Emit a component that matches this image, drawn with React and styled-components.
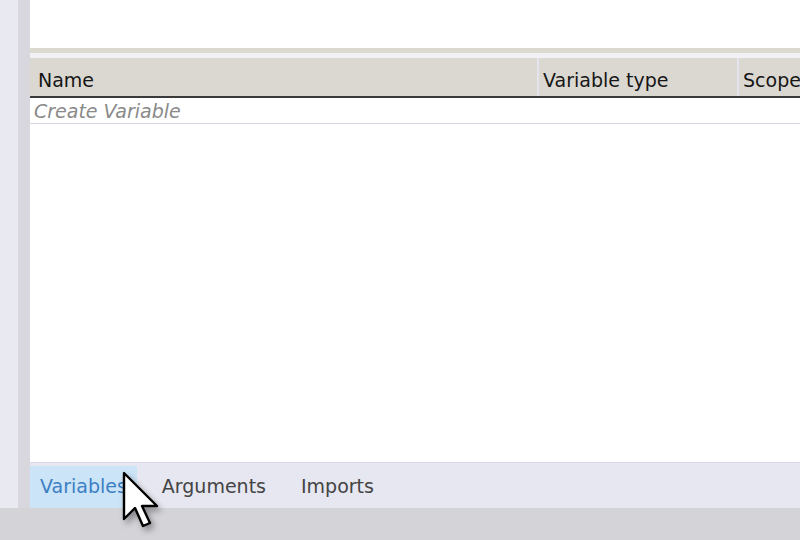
import React from "react";
import styled, { createGlobalStyle } from "styled-components";

const Global = createGlobalStyle`
  html, body {
    margin: 0;
    padding: 0;
    background: #d5d5da;
    overflow: hidden;
  }
  #root {
    width: 800px;
    height: 540px;
  }
`;

const Frame = styled.div`
  width: 800px;
  height: 540px;
  display: grid;
  grid-template-rows: 508px 32px;
  font-family: Tahoma, "DejaVu Sans", "Noto Sans", sans-serif;
`;

const Workspace = styled.div`
  display: grid;
  grid-template-columns: 18px 12px 1fr;
`;

const Gutter = styled.div`
  background: ${({ shade }) => shade};
`;

const StatusStrip = styled.div`
  background: #d3d3d8;
`;

const Pane = styled.div`
  display: flex;
  flex-direction: column;
  min-width: 0;
  overflow: hidden;
`;

const Designer = styled.div`
  height: 48px;
  background: #ffffff;
  border-bottom: 5px solid #dcd9d1;
`;

const Spacer = styled.div`
  height: 5px;
  background: #f1f1f6;
`;

const Grid = styled.div`
  flex: 1;
  background: #ffffff;
  display: flex;
  flex-direction: column;
`;

const HeaderRow = styled.div`
  height: 38px;
  display: grid;
  grid-template-columns: 507px 200px 1fr;
  background: #dbd8d2;
  border-bottom: 2px solid #3a3a3a;
`;

const HeaderCell = styled.div`
  display: flex;
  align-items: center;
  padding: 5px 0 0 ${({ first }) => (first ? "8px" : "4px")};
  font-size: 19px;
  color: #161616;
  white-space: nowrap;
  border-left: ${({ first }) => (first ? "none" : "2px solid #e4e3ee")};
`;

const NewRow = styled.div`
  height: 25px;
  display: flex;
  align-items: center;
  padding-left: 4px;
  font-size: 19px;
  font-style: italic;
  color: #8a8a8a;
  border-bottom: 1px solid #d6d6e4;
`;

const TabBar = styled.div`
  height: 46px;
  display: flex;
  align-items: stretch;
  padding-top: 3px;
  background: #e6e7f0;
  border-top: 1px solid #d8d8e6;
  box-sizing: border-box;
`;

const Tab = styled.div`
  display: flex;
  align-items: center;
  padding: 0 10px 3px 10px;
  margin-right: 15px;
  font-size: 19px;
  color: ${({ active }) => (active ? "#3d7fc4" : "#444444")};
  background: ${({ active }) => (active ? "#cce4f7" : "transparent")};
`;

const Cursor = styled.svg`
  position: absolute;
  left: 122px;
  top: 471px;
  filter: drop-shadow(3px 4px 3px rgba(0, 0, 0, 0.35));
`;

export default function App() {
  return (
    <>
      <Global />
      <Frame>
        <Workspace>
          <Gutter shade="#e9e9f1" />
          <Gutter shade="#d7d7dd" />
          <Pane>
            <Designer />
            <Spacer />
            <Grid>
              <HeaderRow>
                <HeaderCell first>Name</HeaderCell>
                <HeaderCell>Variable type</HeaderCell>
                <HeaderCell>Scope</HeaderCell>
              </HeaderRow>
              <NewRow>Create Variable</NewRow>
            </Grid>
            <TabBar>
              <Tab active>Variables</Tab>
              <Tab>Arguments</Tab>
              <Tab>Imports</Tab>
            </TabBar>
          </Pane>
        </Workspace>
        <StatusStrip />
      </Frame>
      <Cursor width="40" height="66" viewBox="0 0 20 33">
        <path
          d="M1 1 L1 24 L6.5 18.5 L10.5 27.5 L14 26 L10 17.5 L17.5 17.5 Z"
          fill="#ffffff"
          stroke="#000000"
          strokeWidth="1.2"
          strokeLinejoin="round"
        />
      </Cursor>
    </>
  );
}
